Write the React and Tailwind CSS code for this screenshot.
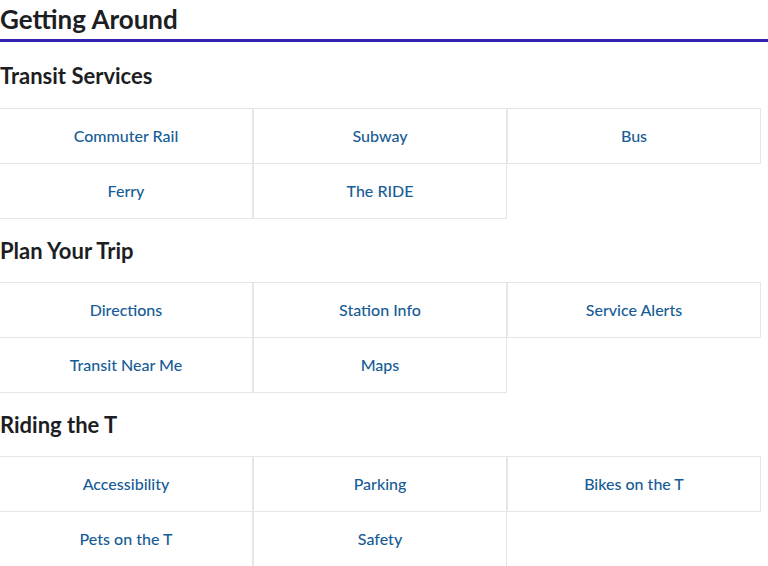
import React from "react";

const sections = [
  { title: "Transit Services", items: ["Commuter Rail", "Subway", "Bus", "Ferry", "The RIDE"] },
  { title: "Plan Your Trip", items: ["Directions", "Station Info", "Service Alerts", "Transit Near Me", "Maps"] },
  { title: "Riding the T", items: ["Accessibility", "Parking", "Bikes on the T", "Pets on the T", "Safety"] },
];

function Grid({ items }) {
  const rows = [];
  for (let i = 0; i < items.length; i += 3) rows.push(items.slice(i, i + 3));
  return (
    <div className="-ml-px">
      {rows.map((row, ri) => (
        <div key={ri} className={"flex " + (ri > 0 ? "-mt-px" : "")}>
          {row.map((it) => (
            <a
              key={it}
              href="#"
              className="flex h-[56px] w-[254px] items-center justify-center border border-[#e5e5ea] text-[16px] font-medium text-[#165c96] no-underline"
            >
              {it}
            </a>
          ))}
        </div>
      ))}
    </div>
  );
}

export default function App() {
  return (
    <div className="h-[566px] w-[768px] overflow-hidden bg-white text-[#1c1e23]" style={{ fontFamily: "Lato, 'Open Sans', sans-serif" }}>
      <h1 className="m-0 border-b-[3px] border-[#3224b0] text-[26px] font-bold leading-[39px]">Getting Around</h1>
      {sections.map((s, i) => (
        <section key={s.title}>
          <h2
            className={
              "text-[22px] font-bold leading-[28px] " +
              (i === 0 ? "mt-[20px] mb-[18px]" : "mt-[18px] mb-[17px]")
            }
          >
            {s.title}
          </h2>
          <Grid items={s.items} />
        </section>
      ))}
    </div>
  );
}
